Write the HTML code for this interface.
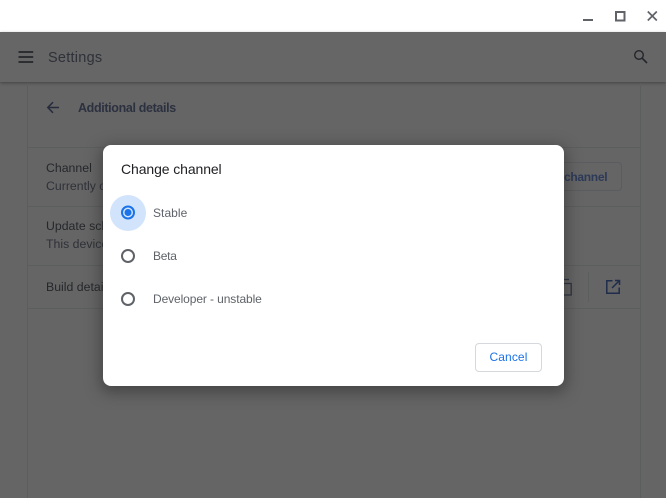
<!DOCTYPE html>
<html><head><meta charset="utf-8">
<style>
html,body{margin:0;padding:0;width:666px;height:498px;overflow:hidden;background:#fff}
*{box-sizing:border-box}
body{font-family:"Liberation Sans",sans-serif;position:relative}
.a{position:absolute;white-space:nowrap}
.l{position:absolute;background:#5c5e5e}
svg{position:absolute;display:block}
</style></head><body>
<svg style="left:576px;top:4px" width="90" height="24" viewBox="0 0 90 24" fill="none">
<rect x="7" y="15" width="10" height="2" fill="#5f6368"/>
<rect x="40" y="8" width="8.5" height="8.5" stroke="#5f6368" stroke-width="2"/>
<path d="M71.8 7.5l9 9M80.8 7.5l-9 9" stroke="#5f6368" stroke-width="1.7"/>
</svg>
<div class="a" style="left:0;top:32px;width:666px;height:466px;background:#656565"></div>
<div class="a" style="left:0;top:32px;width:666px;height:50px;background:#666;box-shadow:0 1px 3px rgba(0,0,0,.35)"></div>
<svg style="left:14px;top:45px" width="24" height="24" viewBox="0 0 24 24"><path d="M4.500 6h14.700v2H4.500zM4.500 11h14.700v2H4.500zM4.500 16h14.700v2H4.500z" fill="#2d2e31"/></svg>
<div class="a" style="left:48px;top:50px;font-size:14.500px;line-height:17px;color:#2e3138;letter-spacing:.25px">Settings</div>
<svg style="left:630px;top:46px" width="22" height="22" viewBox="0 0 22 22" fill="none"><circle cx="9" cy="9" r="4.300" stroke="#23252b" stroke-width="1.400"/><path d="M12.300 12.300L17 17" stroke="#23252b" stroke-width="1.600"/></svg>
<div class="l" style="left:27px;top:83px;width:1px;height:415px"></div>
<div class="l" style="left:640px;top:83px;width:1px;height:415px"></div>
<div class="l" style="left:28px;top:147px;width:612px;height:1px"></div>
<div class="l" style="left:28px;top:206px;width:612px;height:1px"></div>
<div class="l" style="left:28px;top:265px;width:612px;height:1px"></div>
<div class="l" style="left:28px;top:308px;width:612px;height:1px"></div>
<svg style="left:44px;top:98px" width="20" height="20" viewBox="0 0 20 20" fill="none"><path d="M15 9.500H4M9 4.200L3.800 9.500l5.200 5.300" stroke="#262c3c" stroke-width="1.500"/></svg>
<div class="a" style="left:78px;top:100px;font-size:12.500px;line-height:16px;font-weight:bold;color:#2c3140;letter-spacing:-.35px">Additional details</div>
<div class="a" style="left:46px;top:161px;font-size:12.300px;line-height:15px;color:#25272b">Channel</div>
<div class="a" style="left:46px;top:179px;font-size:12.300px;line-height:15px;color:#2e3138">Currently on</div>
<div class="a" style="left:46px;top:219px;font-size:12.300px;line-height:15px;color:#25272b">Update schedule</div>
<div class="a" style="left:46px;top:237px;font-size:12.300px;line-height:15px;color:#2e3138">This device</div>
<div class="a" style="left:46px;top:280px;font-size:12.300px;line-height:15px;color:#25272b">Build details</div>
<div class="a" style="left:500px;top:162px;width:122px;height:29px;border:1px solid #5a5c5f;border-radius:4px"></div>
<div class="a" style="left:564px;top:170px;font-size:12px;line-height:15px;font-weight:bold;color:#2c3a58;letter-spacing:-.3px">channel</div>
<div class="l" style="left:588px;top:272px;width:1px;height:30px"></div>
<svg style="left:556px;top:278px" width="20" height="20" viewBox="0 0 20 20" fill="none"><path d="M5 1.500h8M7 5.500h8.200V17H7z" stroke="#2c3140" stroke-width="1.300"/></svg>
<svg style="left:603px;top:277px" width="20" height="20" viewBox="0 0 20 20" fill="none"><path d="M9.500 3.800H3.800v12.400h12.400V10.500M12 3.500h4.500V8M16 4L9 11" stroke="#1f2c4c" stroke-width="1.500"/></svg>

<div class="a" style="left:103px;top:145px;width:461px;height:241px;background:#fff;border-radius:8px;box-shadow:0 4px 14px 3px rgba(40,42,40,.5)"></div>
<div class="a" style="left:121px;top:161px;font-size:14px;line-height:17px;color:#202124;letter-spacing:-.1px">Change channel</div>
<svg style="left:108px;top:193px" width="40" height="125" viewBox="0 0 40 125" fill="none">
<circle cx="20" cy="20" r="18" fill="#d2e3fc"/>
<circle cx="20" cy="19.500" r="6" stroke="#1a73e8" stroke-width="2"/>
<circle cx="20" cy="19.500" r="3.500" fill="#1a73e8"/>
<circle cx="20" cy="63" r="6" stroke="#5f6368" stroke-width="2"/>
<circle cx="20" cy="106" r="6" stroke="#5f6368" stroke-width="2"/>
</svg>
<div class="a" style="left:153px;top:206px;font-size:12px;line-height:15px;color:#5f6368;letter-spacing:.05px">Stable</div>
<div class="a" style="left:153px;top:249px;font-size:12px;line-height:15px;color:#5f6368;letter-spacing:-.25px">Beta</div>
<div class="a" style="left:153px;top:292px;font-size:12px;line-height:15px;color:#5f6368;letter-spacing:-.1px">Developer - unstable</div>
<div class="a" style="left:475px;top:343px;width:67px;height:29px;border:1px solid #d5d8dc;border-radius:4px;text-align:center;font-size:12px;line-height:27px;color:#1a73e8;letter-spacing:.1px">Cancel</div>
</body></html>
